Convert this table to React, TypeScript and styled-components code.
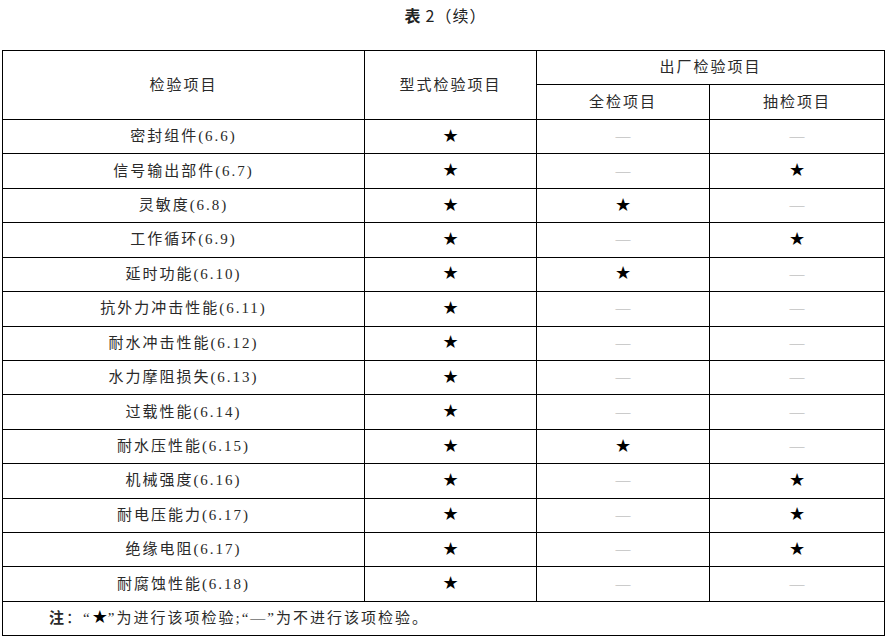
import React from "react";
import styled, { createGlobalStyle } from "styled-components";

const Global = createGlobalStyle`
  html, body { margin: 0; padding: 0; background: #fff; }
  body { font-family: "Liberation Serif", "Noto Sans CJK SC", serif; color: #222; }
`;

const Page = styled.div`
  width: 885px;
  padding: 0 0 0 2px;
  box-sizing: border-box;
`;

const Title = styled.div`
  height: 50px;
  box-sizing: border-box;
  padding-top: 4px;
  text-align: center;
  font-size: 16px;
  line-height: 22px;
  font-family: "Noto Sans CJK SC", sans-serif;
  color: #222;
  letter-spacing: 1px;
  padding-left: 4px;
`;

const Bold = styled.span`
  font-weight: 700;
  margin-right: 4px;
`;

const Table = styled.table`
  border-collapse: collapse;
  width: 882px;
  table-layout: fixed;
`;

const Cell = styled.td<{ $h?: number; $left?: boolean }>`
  border: 1px solid #000;
  padding: 0 0 1px 0;
  height: ${(p) => (p.$h ? `${p.$h}px` : "auto")};
  text-align: ${(p) => (p.$left ? "left" : "center")};
  padding-left: ${(p) => (p.$left ? "46px" : "0")};
  vertical-align: middle;
  font-size: 15px;
  line-height: 20px;
  letter-spacing: 2px;
  font-family: "Liberation Serif", "Noto Sans CJK SC", serif;
  color: #2a2a2a;
  box-sizing: border-box;
`;

const Star = styled.span`
  font-family: "DejaVu Sans", sans-serif;
  font-size: 18px;
  color: #000;
  letter-spacing: 0;
`;

const Dash = styled.span`
  font-family: "Liberation Serif", serif;
  font-size: 15px;
  color: #a8a8a8;
  letter-spacing: 0;
`;

const NoteLabel = styled.span`
  font-weight: 700;
`;

type Mark = "s" | "d";

const rows: [string, Mark, Mark][] = [
  ["密封组件(6.6)", "d", "d"],
  ["信号输出部件(6.7)", "d", "s"],
  ["灵敏度(6.8)", "s", "d"],
  ["工作循环(6.9)", "d", "s"],
  ["延时功能(6.10)", "s", "d"],
  ["抗外力冲击性能(6.11)", "d", "d"],
  ["耐水冲击性能(6.12)", "d", "d"],
  ["水力摩阻损失(6.13)", "d", "d"],
  ["过载性能(6.14)", "d", "d"],
  ["耐水压性能(6.15)", "s", "d"],
  ["机械强度(6.16)", "d", "s"],
  ["耐电压能力(6.17)", "d", "s"],
  ["绝缘电阻(6.17)", "d", "s"],
  ["耐腐蚀性能(6.18)", "d", "d"],
];

const MarkView = ({ m }: { m: Mark }) => (m === "s" ? <Star>★</Star> : <Dash>—</Dash>);

export default function App() {
  return (
    <Page>
      <Global />
      <Title>
        <Bold>表</Bold>2（续）
      </Title>
      <Table>
        <colgroup>
          <col style={{ width: 362 }} />
          <col style={{ width: 172 }} />
          <col style={{ width: 173 }} />
          <col style={{ width: 175 }} />
        </colgroup>
        <tbody>
          <tr>
            <Cell rowSpan={2}>检验项目</Cell>
            <Cell rowSpan={2}>型式检验项目</Cell>
            <Cell colSpan={2} $h={34}>
              出厂检验项目
            </Cell>
          </tr>
          <tr>
            <Cell $h={35}>全检项目</Cell>
            <Cell>抽检项目</Cell>
          </tr>
          {rows.map(([name, a, b]) => (
            <tr key={name}>
              <Cell $h={34.43}>{name}</Cell>
              <Cell>
                <Star>★</Star>
              </Cell>
              <Cell>
                <MarkView m={a} />
              </Cell>
              <Cell>
                <MarkView m={b} />
              </Cell>
            </tr>
          ))}
          <tr>
            <Cell colSpan={4} $h={34} $left>
              <NoteLabel>注</NoteLabel>：“<Star>★</Star>”为进行该项检验;“—”为不进行该项检验。
            </Cell>
          </tr>
        </tbody>
      </Table>
    </Page>
  );
}
